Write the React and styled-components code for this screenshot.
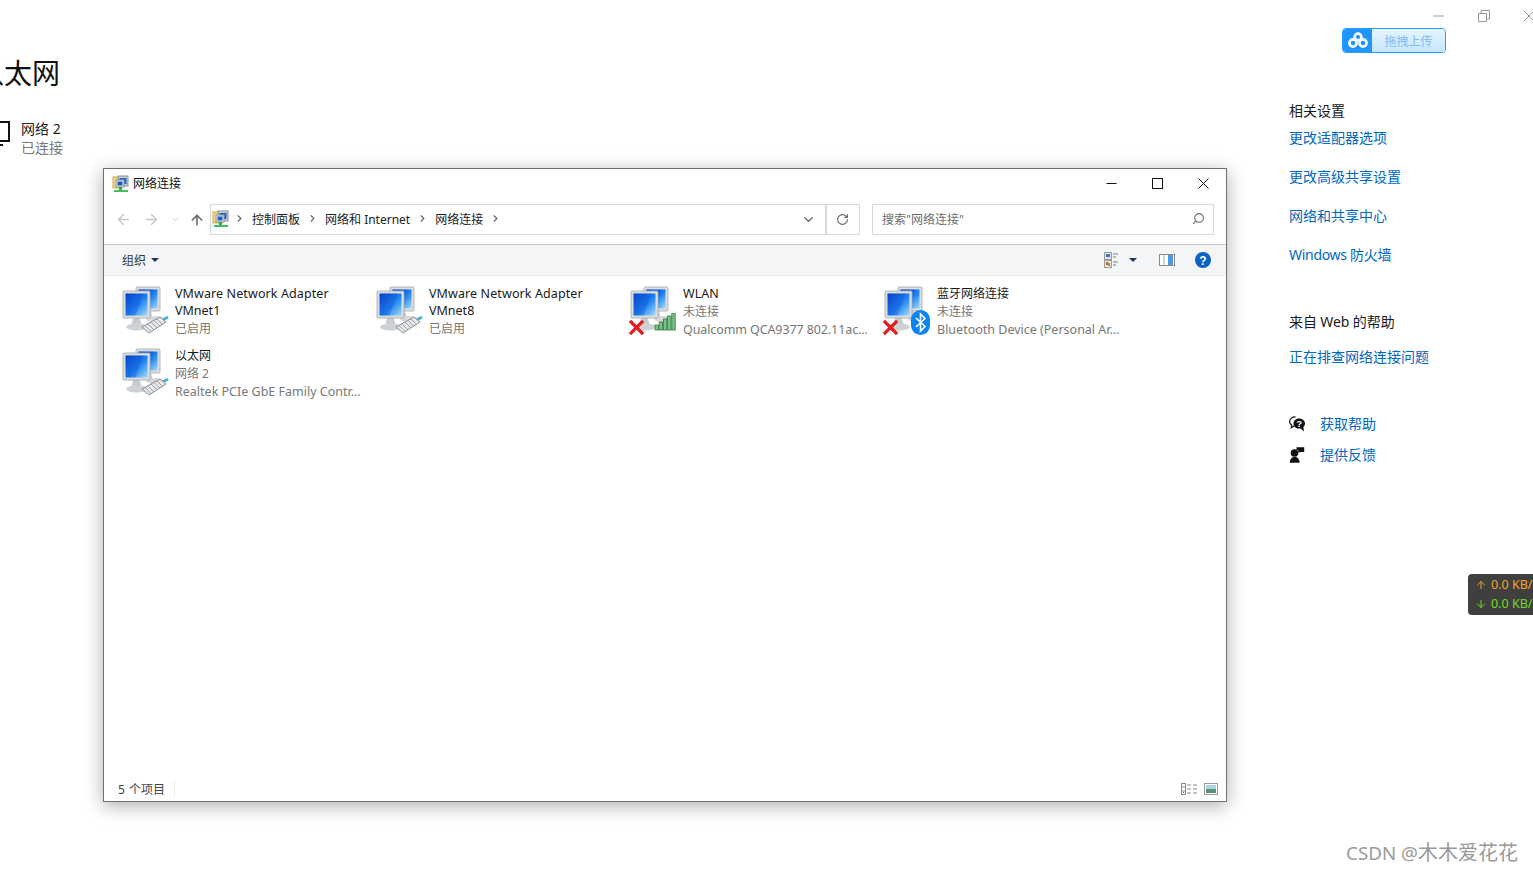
import React from 'react';
import styled, { createGlobalStyle } from 'styled-components';
import { ArrowDown, ArrowLeft, ArrowRight, ArrowUp, ChevronDown, ChevronRight, RotateCw, Search } from 'lucide-react';

const FONT = `'Noto Sans', 'Noto Sans CJK SC', sans-serif`;

const Global = createGlobalStyle`
  html, body { margin: 0; padding: 0; background: #fff; }
  body { font-family: ${FONT}; color: #1a1a1a; }
`;

const Page = styled.div`
  position: relative;
  width: 1533px;
  height: 871px;
  overflow: hidden;
  background: #fff;
  display: flex;
  justify-content: space-between;
`;

const LeftPane = styled.div`
  padding: 52px 0 0 0;
  margin-left: -24px;
`;

const Heading = styled.div`
  font-size: 28px;
  line-height: 42px;
  color: #111;
`;

const NetRow = styled.div`
  display: flex;
  margin-top: 25px;
  margin-left: 17px;
  gap: 10px;
`;

const NetText = styled.div`
  font-size: 14px;
  line-height: 19px;
  color: #222;
  span { display: block; color: #777; }
`;

const RightPane = styled.div`
  width: 244px;
  padding-top: 100px;
  font-size: 14px;
`;

const SectionTitle = styled.div`
  line-height: 22px;
  color: #1a1a1a;
  letter-spacing: ${(p) => (p.$tight ? '-0.1px' : '0')};
  margin-top: ${(p) => p.$top || 0}px;
`;

const LinkRow = styled.a`
  display: flex;
  align-items: center;
  gap: 15px;
  color: #0067c0;
  line-height: 20px;
  height: 20px;
  letter-spacing: ${(p) => (p.$tight ? '-0.3px' : '0')};
  margin-top: ${(p) => p.$top || 19}px;
`;

/* things lying on top of the page */
const CornerControls = styled.div`
  position: absolute;
  top: 10px;
  right: -2px;
  display: flex;
  gap: 33px;
  align-items: center;
`;

const UploadButton = styled.div`
  position: absolute;
  left: 1342px;
  top: 28px;
  width: 104px;
  height: 25px;
  box-sizing: border-box;
  border: 1px solid #2c9bff;
  border-radius: 4px;
  display: flex;
  overflow: hidden;
`;

const UploadIcon = styled.div`
  width: 29px;
  background: #1e95ff;
  display: flex;
  align-items: center;
  justify-content: center;
`;

const UploadLabel = styled.div`
  flex: 1;
  background: linear-gradient(#e6f5ff, #c3e6ff);
  color: #7dbcf0;
  font-size: 12px;
  line-height: 24px;
  padding-top: 1px;
  text-align: center;
`;

const SpeedWidget = styled.div`
  position: absolute;
  left: 1468px;
  top: 574px;
  width: 80px;
  height: 41px;
  box-sizing: border-box;
  padding: 1px 0 0 7px;
  background: #3f3f3f;
  border-radius: 4px;
  font-size: 12.5px;
  line-height: 19px;
  white-space: nowrap;
`;

const SpeedLine = styled.div`
  display: flex;
  align-items: center;
  gap: 4px;
  color: ${(p) => p.$color};
`;

const Watermark = styled.div`
  position: absolute;
  right: 15px;
  top: 839px;
  font-size: 20px;
  line-height: 27px;
  color: #9a9a9a;
`;

const WatermarkLatin = styled.span`
  font-size: 18.8px;
`;

const Win = styled.div`
  position: absolute;
  left: 103px;
  top: 168px;
  width: 1124px;
  height: 634px;
  box-sizing: border-box;
  border: 1px solid #6f6f6f;
  background: #fff;
  box-shadow: 0 4px 18px rgba(0, 0, 0, 0.32);
  display: flex;
  flex-direction: column;
  font-size: 12px;
`;

const TitleBar = styled.div`
  height: 29px;
  display: flex;
  align-items: center;
  padding-left: 8px;
  color: #111;
`;

const TitleText = styled.div`
  flex: 1;
  margin-left: 3px;
  padding-bottom: 2px;
`;

const WinButton = styled.div`
  width: 46px;
  height: 29px;
  display: flex;
  align-items: center;
  justify-content: center;
`;

const AddressRow = styled.div`
  height: 47px;
  box-sizing: border-box;
  border-bottom: 1px solid #c9c9c9;
  padding: 6px 12px 9px 11px;
  display: flex;
  align-items: center;
  color: #c6c6c6;
`;

const NavButtons = styled.div`
  width: 95px;
  flex-shrink: 0;
  display: flex;
  align-items: center;
  gap: 11px;
`;

const UpArrow = styled(ArrowUp)`
  margin-left: -2px;
  color: #6a6a6a;
`;

const AddressBox = styled.div`
  width: 616px;
  height: 31px;
  box-sizing: border-box;
  border: 1px solid #d9d9d9;
  display: flex;
  align-items: center;
  color: #222;
`;

const Crumbs = styled.div`
  flex: 1;
  display: flex;
  align-items: center;
  padding: 0 0 2px 1px;
  gap: 7px;
`;

const CrumbRoot = styled.span`
  display: flex;
  margin-right: -3px;
`;

const CrumbChevron = styled(ChevronRight)`
  width: 11px;
  height: 11px;
  color: #666;
`;

const Dropdown = styled.div`
  width: 34px;
  height: 100%;
  display: flex;
  align-items: center;
  justify-content: center;
  color: #555;
`;

const RefreshBox = styled.div`
  width: 34px;
  height: 31px;
  box-sizing: border-box;
  border: 1px solid #d9d9d9;
  border-left: 0;
  display: flex;
  align-items: center;
  justify-content: center;
  color: #666;
  position: relative;
  &::before { content: ''; position: absolute; left: 0; top: 0; bottom: 0; width: 1px; background: #d9d9d9; }
`;

const SearchBox = styled.div`
  margin-left: 12px;
  flex: 1;
  height: 31px;
  box-sizing: border-box;
  border: 1px solid #d9d9d9;
  display: flex;
  align-items: center;
  justify-content: space-between;
  padding: 0 8px 2px 9px;
  color: #6d6d6d;
`;

const SearchGlyph = styled(Search)`
  transform: scaleX(-1);
  color: #666;
`;

const Toolbar = styled.div`
  height: 31px;
  box-sizing: border-box;
  background: #f4f5f7;
  border-bottom: 1px solid #ececec;
  display: flex;
  align-items: center;
  padding: 0 15px 0 18px;
  color: #333;
`;

const Organize = styled.div`
  flex: 1;
  display: flex;
  align-items: center;
  gap: 5px;
`;

const ToolIcons = styled.div`
  display: flex;
  align-items: center;
  gap: 20px;
`;

const ViewSwitch = styled.div`
  display: flex;
  align-items: center;
  gap: 9px;
  margin-right: 2px;
`;

const Caret = styled.span`
  display: inline-block;
  width: 0;
  height: 0;
  border-left: 4px solid transparent;
  border-right: 4px solid transparent;
  border-top: 4px solid #1f3a5f;
`;

const Content = styled.div`
  flex: 1;
  display: grid;
  grid-template-columns: repeat(4, 254px);
  grid-auto-rows: 62px;
  align-content: start;
  padding: 8px 0 0 17px;
`;

const Item = styled.div`
  display: flex;
  gap: 6px;
`;

const IconSlot = styled.div`
  position: relative;
  width: 48px;
  height: 48px;
  flex-shrink: 0;
  margin-top: 2px;
`;

const Badge = styled.div`
  position: absolute;
  left: ${(p) => p.$left}px;
  top: ${(p) => p.$top}px;
  line-height: 0;
`;

const ItemText = styled.div`
  line-height: 18px;
  white-space: nowrap;
  padding-top: 1px;
`;

const Line = styled.div`
  font-size: ${(p) => (p.$cjk ? 12 : 12.5)}px;
  letter-spacing: ${(p) => p.$spacing || 0}px;
  margin-top: ${(p) => (p.$raised ? -1 : 0)}px;
  color: ${(p) => (p.$muted ? '#777' : '#1a1a1a')};
`;

const StatusBar = styled.div`
  height: 23px;
  box-sizing: border-box;
  display: flex;
  align-items: center;
  padding: 0 8px 2px 14px;
  color: #444;
`;

const StatusCount = styled.div`
  flex: 1;
  display: flex;
  word-spacing: 1px;
  span { margin-left: 9px; border-left: 1px solid #efefef; }
`;

const StatusIcons = styled.div`
  display: flex;
  gap: 6px;
  align-items: center;
`;

const FolderNetIcon = () => (
  <svg width="18" height="18" viewBox="0 0 18 18">
    <rect x="1" y="2" width="9" height="11" fill="#f2d98a" stroke="#c9a94c" />
    <rect x="6" y="1" width="10" height="10" fill="#c8ccd0" stroke="#8d9298" />
    <rect x="7.5" y="3" width="7" height="6" fill="#2467c8" />
    <rect x="4" y="5" width="8" height="7" fill="#e8e8e8" stroke="#8d9298" />
    <rect x="5.5" y="6.5" width="5" height="4" fill="#1d5fc4" />
    <rect x="7" y="12" width="3" height="3" fill="#2fae4e" />
    <rect x="2" y="15" width="14" height="2" fill="#3fbf60" />
  </svg>
);

const Monitor = ({ x, y, w, h, id }) => (
  <g>
    <path d={`M${x + w * 0.38} ${y + h} h${w * 0.24} l2 7 h-${w * 0.24 + 4} z`} fill="#c9cccf" />
    <rect x={x} y={y} width={w} height={h} rx="1" fill="#dcdee0" stroke="#a3a8ad" strokeWidth="0.8" />
    <rect x={x + 2.5} y={y + 2.5} width={w - 5} height={h - 5} fill={`url(#${id})`} />
    <path d={`M${x + 2.5} ${y + 2.5} h${w - 9} l-${w * 0.3} ${h - 5} h-${w * 0.32} z`} fill="#0a3fc0" opacity="0.25" />
  </g>
);

const ComputersIcon = ({ id }) => (
  <svg width="48" height="48" viewBox="0 0 48 48">
    <defs>
      <linearGradient id={id} x1="0" y1="0" x2="1" y2="1">
        <stop offset="0" stopColor="#0646d0" />
        <stop offset="0.55" stopColor="#1f84f2" />
        <stop offset="1" stopColor="#a4daf9" />
      </linearGradient>
    </defs>
    <Monitor x={15} y={1} w={24} h={24} id={id} />
    <ellipse cx="34" cy="33" rx="9" ry="3" fill="#d6d8da" />
    <Monitor x={2} y={5} w={27} h={27} id={id} />
    <ellipse cx="16" cy="41" rx="11" ry="3.5" fill="#cfd1d3" />
  </svg>
);

const CableBadge = () => (
  <svg width="28" height="20" viewBox="0 0 28 20">
    <path d="M20 6 L27 2" stroke="#4fb0d6" strokeWidth="3" fill="none" />
    <path d="M1 12 L19 2 L25 7 L8 18 Z" fill="#e6e9eb" stroke="#7d858b" strokeWidth="0.9" />
    <path d="M4 10.5 l6 6 M7 9 l6 6 M10 7 l6 6 M13 5.5 l6 6 M16 4 l6 6" stroke="#929a9f" strokeWidth="0.9" />
  </svg>
);

const RedCross = () => (
  <svg width="15" height="15" viewBox="0 0 15 15">
    <path d="M2 2 L13 13 M13 2 L2 13" stroke="#e01f1f" strokeWidth="3.2" strokeLinecap="square" />
  </svg>
);

const SignalBadge = () => (
  <svg width="22" height="18" viewBox="0 0 22 18">
    {[0, 1, 2, 3, 4].map((i) => (
      <rect key={i} x={1 + i * 4.2} y={12 - i * 3} width="3.4" height={5 + i * 3} fill="#7fc08a" stroke="#2c7a3d" strokeWidth="0.8" />
    ))}
  </svg>
);

const BluetoothBadge = () => (
  <svg width="19" height="25" viewBox="0 0 19 25">
    <rect x="0" y="0" width="19" height="25" rx="9.5" fill="#0a84ef" />
    <path d="M5 8 L14 16.5 L9.5 21 V4 L14 8.5 L5 17" stroke="#fff" strokeWidth="1.6" fill="none" />
  </svg>
);

const ViewIcon = () => (
  <svg width="16" height="16" viewBox="0 0 16 16">
    <rect x="0.5" y="0.5" width="7" height="7" fill="#dce8f2" stroke="#9a9a9a" />
    <rect x="2" y="2" width="4" height="3" fill="#3f78b8" />
    <rect x="0.5" y="8.5" width="7" height="7" fill="#f2e7cc" stroke="#9a9a9a" />
    <rect x="2" y="10" width="2" height="3" fill="#d9534f" />
    <rect x="4" y="11" width="2" height="3" fill="#5aa85a" />
    <path d="M9 2 h5 M9 5 h3 M9 10 h5 M9 13 h3" stroke="#7a7a7a" />
  </svg>
);

const PreviewIcon = () => (
  <svg width="16" height="12" viewBox="0 0 16 12">
    <rect x="0.5" y="0.5" width="15" height="11" fill="#fff" stroke="#8a8a8a" />
    <rect x="9" y="1" width="5" height="10" fill="#4a9be0" />
    <path d="M5 1 v10" stroke="#a8a8a8" />
  </svg>
);

const HelpIcon = () => (
  <svg width="16" height="16" viewBox="0 0 16 16">
    <circle cx="8" cy="8" r="8" fill="#0b62c4" />
    <text x="8" y="12.5" textAnchor="middle" fontSize="12" fontWeight="700" fill="#fff" fontFamily="Liberation Sans, sans-serif">?</text>
  </svg>
);

const DetailsIcon = () => (
  <svg width="17" height="12" viewBox="0 0 17 12">
    <rect x="0.5" y="0.5" width="4" height="11" fill="#fff" stroke="#8a8a8a" />
    <path d="M0.5 4 h4 M0.5 8 h4" stroke="#8a8a8a" />
    <rect x="2" y="9" width="1" height="1" fill="#d33" />
    <path d="M6 2 h4 M12 2 h4 M6 6 h4 M12 6 h4 M6 10 h4 M12 10 h4" stroke="#8a8a8a" />
  </svg>
);

const ThumbIcon = () => (
  <svg width="14" height="12" viewBox="0 0 14 12">
    <rect x="0.5" y="0.5" width="13" height="11" fill="#fff" stroke="#9a9a9a" />
    <rect x="2" y="2" width="10" height="4" fill="#a8d4ea" />
    <rect x="2" y="6" width="10" height="4" fill="#5c8f78" />
  </svg>
);

const ChatHelpIcon = () => (
  <svg width="16" height="16" viewBox="0 0 16 16">
    <path d="M6.5 0.8 C3 0.8 0.6 2.8 0.6 5.5 C0.6 7.3 1.7 8.6 2.8 9.3 L2.3 11.8 L5 10 H6.5" fill="#fff" stroke="#111" strokeWidth="1.2" />
    <path d="M10 2.5 C6.8 2.5 4.5 4.7 4.5 7.6 C4.5 10.5 6.8 12.6 10 12.6 C10.6 12.6 11.2 12.5 11.7 12.4 L15 15.5 L14.4 11 C15.4 10 16 8.9 16 7.6 C16 4.7 13.2 2.5 10 2.5 Z" fill="#111" />
    <text x="10.2" y="11.2" textAnchor="middle" fontSize="9" fontWeight="700" fill="#fff" fontFamily="Liberation Sans, sans-serif">?</text>
  </svg>
);

const FeedbackIcon = () => (
  <svg width="16" height="16" viewBox="0 0 16 16">
    <circle cx="5.5" cy="6" r="3.8" fill="#111" />
    <path d="M0.8 15.8 C0.8 12 3 10 5.7 10 C8.4 10 10.6 12 10.6 15.8 Z" fill="#111" />
    <path d="M7.5 0.2 H15.2 V5 H10.8 L9.2 6 V3 H7.5 Z" fill="#111" />
  </svg>
);

const CloudLogo = () => (
  <svg width="20" height="17" viewBox="0 0 20 17">
    <circle cx="10" cy="5" r="3.4" fill="none" stroke="#fff" strokeWidth="2.6" />
    <circle cx="5" cy="11" r="3.6" fill="none" stroke="#fff" strokeWidth="2.6" />
    <circle cx="15" cy="11" r="3.6" fill="none" stroke="#fff" strokeWidth="2.6" />
  </svg>
);

const MonitorOutline = () => (
  <svg width="18" height="28" viewBox="0 0 18 28">
    <rect x="-5" y="3" width="21" height="19" fill="none" stroke="#111" strokeWidth="2" />
    <rect x="7" y="25" width="3" height="2" fill="#111" />
  </svg>
);

const hasCjk = (text) => /[^\x00-\x7f]/.test(text);

const connections = [
  { name: 'VMware Network Adapter', nameSpacing: 0.1, second: 'VMnet1', third: '已启用', secondDark: true, type: 'cable' },
  { name: 'VMware Network Adapter', nameSpacing: 0.1, second: 'VMnet8', third: '已启用', secondDark: true, type: 'cable' },
  { name: 'WLAN', second: '未连接', third: 'Qualcomm QCA9377 802.11ac...', thirdSpacing: -0.1, type: 'wifi' },
  { name: '蓝牙网络连接', second: '未连接', third: 'Bluetooth Device (Personal Ar...', type: 'bluetooth' },
  { name: '以太网', second: '网络 2', third: 'Realtek PCIe GbE Family Contr...', type: 'cable' },
];

const ConnectionItem = ({ item, index }) => (
  <Item>
    <IconSlot>
      <ComputersIcon id={`screen${index}`} />
      {item.type === 'cable' && <Badge $left={20} $top={29}><CableBadge /></Badge>}
      {item.type === 'wifi' && <Badge $left={0} $top={34}><RedCross /></Badge>}
      {item.type === 'wifi' && <Badge $left={25} $top={27}><SignalBadge /></Badge>}
      {item.type === 'bluetooth' && <Badge $left={0} $top={34}><RedCross /></Badge>}
      {item.type === 'bluetooth' && <Badge $left={28} $top={24}><BluetoothBadge /></Badge>}
    </IconSlot>
    <ItemText>
      <Line $cjk={hasCjk(item.name)} $spacing={item.nameSpacing}>{item.name}</Line>
      <Line $cjk={hasCjk(item.second)} $muted={!item.secondDark} $raised={item.secondDark}>{item.second}</Line>
      <Line $cjk={hasCjk(item.third)} $spacing={item.thirdSpacing} $muted>{item.third}</Line>
    </ItemText>
  </Item>
);

const Crumb = ({ children }) => (
  <>
    <span>{children}</span>
    <CrumbChevron strokeWidth={2.5} />
  </>
);

const App = () => (
  <Page>
    <Global />
    <LeftPane>
      <Heading>以太网</Heading>
      <NetRow>
        <MonitorOutline />
        <NetText>
          网络 2
          <span>已连接</span>
        </NetText>
      </NetRow>
    </LeftPane>

    <RightPane>
      <SectionTitle>相关设置</SectionTitle>
      <LinkRow $top={6}>更改适配器选项</LinkRow>
      <LinkRow>更改高级共享设置</LinkRow>
      <LinkRow>网络和共享中心</LinkRow>
      <LinkRow $tight>Windows 防火墙</LinkRow>
      <SectionTitle $top={46} $tight>来自 Web 的帮助</SectionTitle>
      <LinkRow $top={14}>正在排查网络连接问题</LinkRow>
      <LinkRow $top={47}><ChatHelpIcon />获取帮助</LinkRow>
      <LinkRow $top={11}><FeedbackIcon />提供反馈</LinkRow>
    </RightPane>

    <CornerControls>
      <svg width="12" height="12" viewBox="0 0 12 12"><path d="M0 6 H11" stroke="#999" /></svg>
      <svg width="12" height="12" viewBox="0 0 12 12"><path d="M0.5 3.5 H8.5 V11.5 H0.5 Z M3 3 V0.5 H11.5 V9 H9" fill="none" stroke="#999" /></svg>
      <svg width="12" height="12" viewBox="0 0 12 12"><path d="M1 1 L11 11 M11 1 L1 11" stroke="#999" /></svg>
    </CornerControls>

    <UploadButton>
      <UploadIcon><CloudLogo /></UploadIcon>
      <UploadLabel>拖拽上传</UploadLabel>
    </UploadButton>

    <SpeedWidget>
      <SpeedLine $color="#f5a02a"><ArrowUp size={12} strokeWidth={2} />0.0 KB/s</SpeedLine>
      <SpeedLine $color="#6fdc1e"><ArrowDown size={12} strokeWidth={2} />0.0 KB/s</SpeedLine>
    </SpeedWidget>

    <Win>
      <TitleBar>
        <FolderNetIcon />
        <TitleText>网络连接</TitleText>
        <WinButton><svg width="11" height="11" viewBox="0 0 11 11"><path d="M0.5 5.5 H10.5" stroke="#111" /></svg></WinButton>
        <WinButton><svg width="11" height="11" viewBox="0 0 11 11"><rect x="0.5" y="0.5" width="10" height="10" fill="none" stroke="#111" /></svg></WinButton>
        <WinButton><svg width="11" height="11" viewBox="0 0 11 11"><path d="M0.5 0.5 L10.5 10.5 M10.5 0.5 L0.5 10.5" stroke="#111" /></svg></WinButton>
      </TitleBar>
      <AddressRow>
        <NavButtons>
          <ArrowLeft size={17} strokeWidth={2} />
          <ArrowRight size={17} strokeWidth={2} />
          <ChevronDown size={9} strokeWidth={2.5} />
          <UpArrow size={16} strokeWidth={2.4} />
        </NavButtons>
        <AddressBox>
          <Crumbs>
            <CrumbRoot><FolderNetIcon /></CrumbRoot>
            <CrumbChevron strokeWidth={2.5} />
            <Crumb>控制面板</Crumb>
            <Crumb>网络和 Internet</Crumb>
            <Crumb>网络连接</Crumb>
          </Crumbs>
          <Dropdown><ChevronDown size={15} strokeWidth={2} /></Dropdown>
        </AddressBox>
        <RefreshBox><RotateCw size={13} strokeWidth={2} /></RefreshBox>
        <SearchBox>
          搜索"网络连接"
          <SearchGlyph size={13} strokeWidth={2} />
        </SearchBox>
      </AddressRow>
      <Toolbar>
        <Organize>组织 <Caret /></Organize>
        <ToolIcons>
          <ViewSwitch>
            <ViewIcon />
            <Caret />
          </ViewSwitch>
          <PreviewIcon />
          <HelpIcon />
        </ToolIcons>
      </Toolbar>
      <Content>
        {connections.map((item, i) => (
          <ConnectionItem key={i} item={item} index={i} />
        ))}
      </Content>
      <StatusBar>
        <StatusCount>5 个项目<span /></StatusCount>
        <StatusIcons>
          <DetailsIcon />
          <ThumbIcon />
        </StatusIcons>
      </StatusBar>
    </Win>

    <Watermark><WatermarkLatin>CSDN @</WatermarkLatin>木木爱花花</Watermark>
  </Page>
);

export default App;
